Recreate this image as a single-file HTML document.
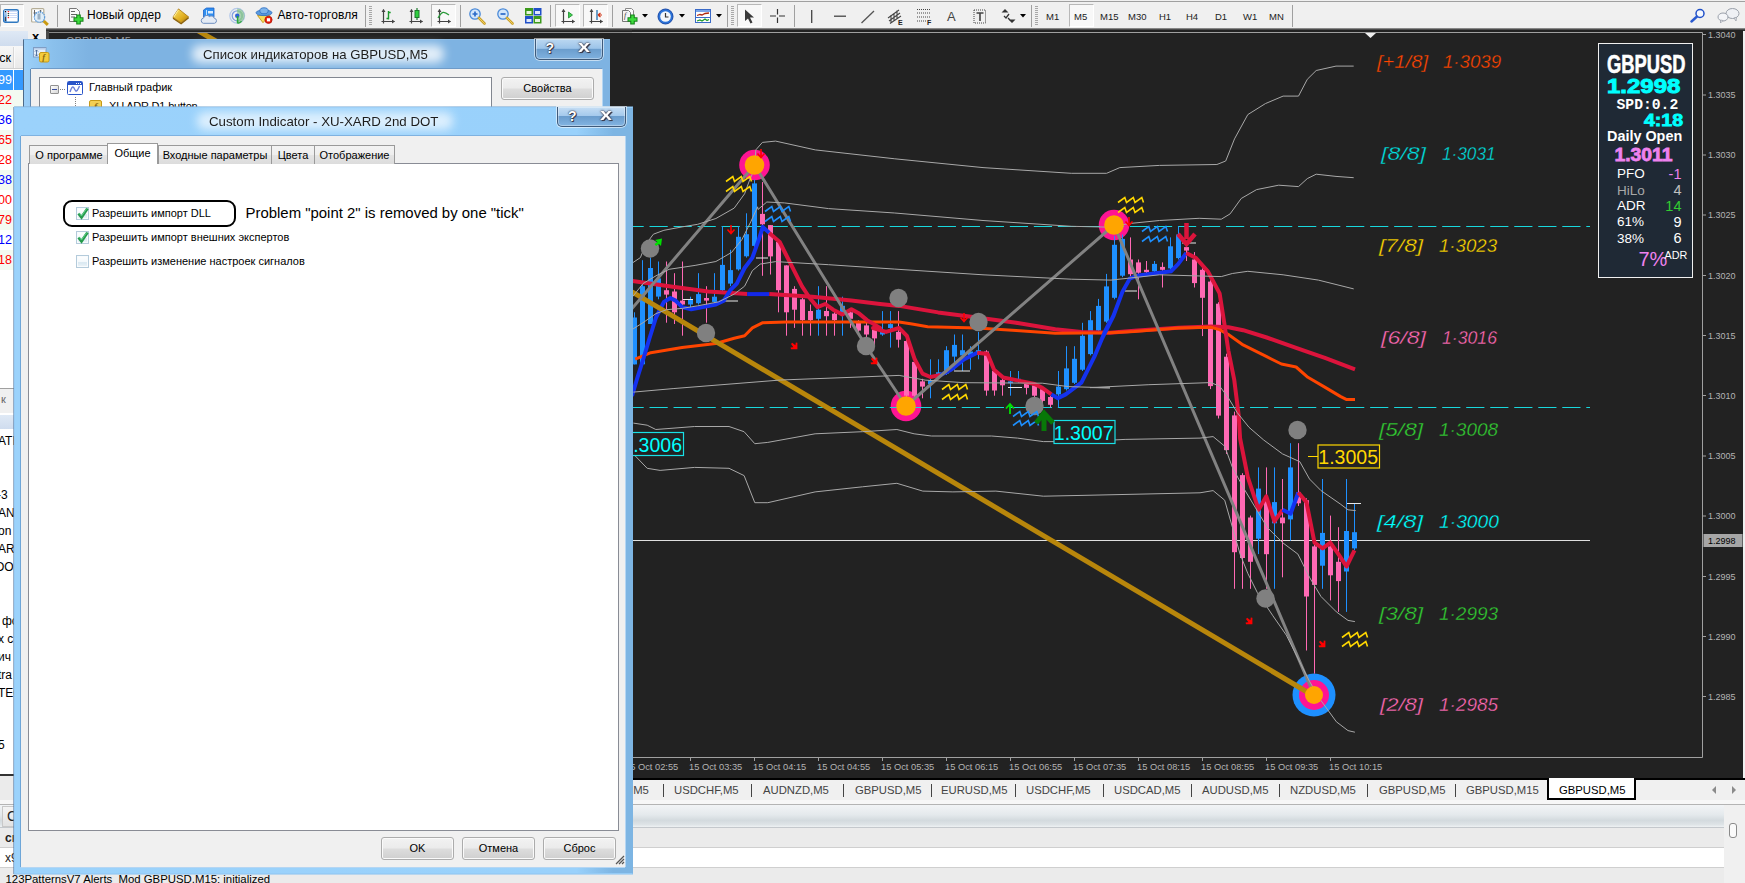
<!DOCTYPE html>
<html lang="ru">
<head>
<meta charset="utf-8">
<title>MetaTrader 4</title>
<style>
html,body{margin:0;padding:0;background:#f0f0f0;}
body{width:1745px;height:883px;overflow:hidden;position:relative;font-family:"Liberation Sans",sans-serif;font-size:11px;color:#000;}
.abs{position:absolute;}
#toolbar{left:0;top:0;width:1745px;height:31px;background:#f0f0f0;}
#toolbar .topline{left:0;top:1px;width:1745px;height:1px;background:#a0a0a0;}
#toolbar .botline{left:46px;top:28px;width:1699px;height:3px;background:linear-gradient(#a8a8a8,#505050 45%,#222222);}
.prs{box-sizing:border-box;border:1px solid #b8b8b8;border-right-color:#fff;border-bottom-color:#fff;background:#f8f8f8;}
.tbtxt{position:absolute;top:8px;font-size:12px;white-space:nowrap;color:#000;}
.tf{position:absolute;top:11px;font-size:9.500px;color:#222;white-space:nowrap;}
.sep{position:absolute;top:5px;width:1px;height:22px;background:#a0a0a0;}
.grip{position:absolute;top:6px;width:3px;height:20px;background:repeating-linear-gradient(#a8a8a8 0 1px,#f0f0f0 1px 2px);}
#chart{left:632px;top:30px;width:1111px;height:748px;background:#222222;}
#chartsvg{position:absolute;left:0;top:0;}
#left{left:0;top:31px;width:46px;height:852px;background:#fff;overflow:hidden;}
.mw{left:-2px;width:13px;text-align:right;font-size:12.500px;white-space:nowrap;}
.nv{left:-2px;font-size:12px;white-space:nowrap;color:#000;}
#tabsbar{left:632px;top:778px;width:1113px;height:22px;background:#f0f0f0;border-top:1px solid #fff;box-sizing:border-box;}
.ctab{position:absolute;top:5px;font-size:11.300px;color:#444;white-space:nowrap;}
.csep{position:absolute;top:5px;width:1px;height:13px;background:#444;}
#term{left:0;top:800px;width:1745px;height:83px;background:#f0f0f0;}
/* dialogs */
.dlg{position:absolute;box-sizing:border-box;}
.dlg .title{position:absolute;left:0;right:0;text-align:center;font-size:14px;color:#000;white-space:nowrap;}
.client{position:absolute;background:#f0f0f0;}
.capbtn{position:absolute;box-sizing:border-box;border:1px solid #3f5a7a;border-top:none;border-radius:0 0 5px 5px;box-shadow:0 0 0 1px rgba(255,255,255,.55),inset 0 0 0 1px rgba(255,255,255,.35);}
.btn{position:absolute;box-sizing:border-box;border:1px solid #acacac;border-radius:3px;background:linear-gradient(#f2f2f2 0%,#ebebeb 48%,#dddddd 52%,#cfcfcf 100%);text-align:center;font-size:11px;color:#000;box-shadow:inset 0 0 0 1px #fafafa;}
.tab{position:absolute;box-sizing:border-box;border:1px solid #9a9a9a;border-bottom:none;background:linear-gradient(#f3f3f3,#eeeeee 50%,#e4e4e4 51%,#dcdcdc);font-size:11px;text-align:center;white-space:nowrap;}
.chk{position:absolute;width:11px;height:11px;border:1px solid #b4cbdb;background:linear-gradient(180deg,#ffffff 0%,#f4f9fc 50%,#d9e8f1 60%,#eef5f9 100%);box-shadow:inset 0 0 0 1px #f8fbfd;}
.glow{position:absolute;background:rgba(255,255,255,.78);filter:blur(5px);border-radius:8px;}
.capx{transform:scaleX(1.350);transform-origin:0 0;font-size:16px !important;top:-1px !important;}
.capg{position:absolute;top:1px;font-size:14px;font-weight:bold;color:#fff;text-shadow:0 0 1px #223,0 0 2px #334,1px 1px 0 #445;font-family:"Liberation Sans",sans-serif;}
.lbl{position:absolute;font-size:11px;white-space:nowrap;}
</style>
</head>
<body>
<!-- ======= TOOLBAR ======= -->
<div id="toolbar" class="abs">
<div class="abs topline"></div><div class="abs botline"></div>
<div class="abs prs" style="left:0px;top:4px;width:24px;height:23px"></div>
<svg class="abs" style="left:3px;top:9px" width="17" height="15" viewBox="0 0 17 15"><defs><linearGradient id="mwg" x1="0" y1="0" x2="0" y2="1"><stop offset="0" stop-color="#cfe3fa"/><stop offset="1" stop-color="#2f78c8"/></linearGradient></defs><rect x="0.700" y="0.700" width="14.600" height="12.600" rx="1.600" fill="#fff" stroke="#2f78c0" stroke-width="1.400"/><rect x="1.300" y="1.300" width="2.400" height="11.400" fill="url(#mwg)"/><path d="M6.500 2.500h8M6.500 4.500h8M6.500 6.500h8M6.500 8.500h8" stroke="#cfdcf8" stroke-width="1"/><rect x="4.700" y="2" width="1.400" height="1.200" fill="#f22"/><rect x="4.700" y="4" width="1.400" height="1.200" fill="#243"/><rect x="4.700" y="6" width="1.400" height="1.200" fill="#243"/><rect x="4.700" y="8" width="1.400" height="1.200" fill="#f22"/><rect x="1.900" y="2" width="1.200" height="1.200" fill="#000"/><rect x="2" y="8" width="1" height="4" fill="#444"/></svg>
<svg class="abs" style="left:31px;top:8px" width="19" height="18" viewBox="0 0 19 18"><rect x="0.600" y="0.600" width="12.200" height="13.400" rx="1" fill="#fff" stroke="#b5ae98" stroke-width="1.200"/><path d="M3.500 2v6M2.500 5h3M9.500 2v4M8.500 3h2" stroke="#666" stroke-width="1"/><circle cx="8.500" cy="9.100" r="5.200" fill="#dcedf8" fill-opacity=".92" stroke="#4a90d8" stroke-width="1.100" stroke-dasharray="1.500 .700"/><rect x="6.500" y="5.500" width="3" height="6" fill="#9ab0c4"/><path d="M12.800 13L16.800 16.800" stroke="#c99a10" stroke-width="3" stroke-linecap="butt"/></svg>
<div class="sep" style="left:57px"></div>
<svg class="abs" style="left:68px;top:8px" width="17" height="18" viewBox="0 0 17 18"><path d="M1.500 0.500h7l3 3v10h-10z" fill="#fafafa" stroke="#777"/><path d="M3 3.500h4M3 6.500h6M3 9h4" stroke="#666" stroke-width="1.200"/><path d="M10.500 6.500v10M5.500 11.500h10" stroke="#14821a" stroke-width="4.600"/><path d="M10.500 7.500v8M6.500 11.500h8" stroke="#3ddc3d" stroke-width="2.400"/></svg>
<span class="tbtxt" id="no" style="left:87px">Новый ордер</span>
<svg class="abs" style="left:172px;top:8px" width="19" height="17" viewBox="0 0 19 17"><defs><linearGradient id="bkg" x1="0" y1="0" x2="1" y2="1"><stop offset="0" stop-color="#fbe36a"/><stop offset=".6" stop-color="#e0ae20"/><stop offset="1" stop-color="#a87508"/></linearGradient></defs><path d="M6.500 0.900L16.700 9.000L9.100 14.800L0.900 9.300z" fill="url(#bkg)" stroke="#a87508" stroke-width=".800"/><path d="M1 10.300l8.100 5.500 7.500-6" stroke="#8a5f08" stroke-width="1.300" fill="none"/><path d="M6.300 2l-4.500 7" stroke="#fff3a8" stroke-width="1" fill="none"/></svg>
<svg class="abs" style="left:200px;top:7px" width="19" height="18" viewBox="0 0 19 18"><path d="M3.500 3l3-2h7.500v9h-10.500z" fill="#2f8ef0" stroke="#1c62c8" stroke-width=".800"/><path d="M6.500 3v7" stroke="#bfe0ff" stroke-width="1"/><rect x="8" y="4" width="5" height="2.500" fill="#d8ecff"/><path d="M3.300 16.300a2.700 2.700 0 0 1 0.300-5.300 3.300 3.300 0 0 1 5.800-1.400 3 3 0 0 1 4.800 1.600 2.600 2.600 0 0 1 .3 5.100z" fill="#e4ebf5" stroke="#6f8fc0" stroke-width="1"/></svg>
<svg class="abs" style="left:228px;top:7px" width="18" height="18" viewBox="0 0 18 18"><circle cx="9.200" cy="8.800" r="7.400" fill="none" stroke="#b4c8ea" stroke-width="1.200"/><circle cx="9.200" cy="8.800" r="5" fill="none" stroke="#7f9fe0" stroke-width="1.300"/><path d="M9.200 1.400a7.400 7.400 0 0 1 0 14.800z" fill="#6fb87a" fill-opacity=".55"/><path d="M9.200 3.800a5 5 0 0 1 0 10" fill="none" stroke="#8cc896" stroke-width="1.300"/><circle cx="9.200" cy="8.800" r="2.200" fill="#2f62d8"/><path d="M9.600 9v7.300" stroke="#2aa83a" stroke-width="1.600"/><path d="M9.600 16.200a7.500 7.500 0 0 0 4-2" stroke="#3aaa4a" stroke-width="1.400" fill="none"/></svg>
<svg class="abs" style="left:255px;top:7px" width="19" height="18" viewBox="0 0 19 18"><path d="M2.500 8.500l5.500 7.200 7-7.500z" fill="#f6dc5a" stroke="#c7981a" stroke-width=".900"/><ellipse cx="9" cy="5.800" rx="8" ry="2.800" fill="#5a9be0" stroke="#3474c4" stroke-width=".900"/><ellipse cx="9" cy="3.800" rx="4.200" ry="3" fill="#7cb4ec" stroke="#3474c4" stroke-width=".900"/><circle cx="13.500" cy="12.800" r="3.600" fill="#e8200c" stroke="#b01408" stroke-width=".800"/><rect x="11.900" y="11.200" width="3.200" height="3.200" fill="#fff"/></svg>
<span class="tbtxt" id="at" style="left:277.400px;letter-spacing:.100px">Авто-торговля</span>
<div class="sep" style="left:365px"></div>
<div class="grip" style="left:369px"></div>
<svg class="abs" style="left:381px;top:9px" width="15" height="16" viewBox="0 0 15 16"><path d="M2.500 0.500v14M0.500 12.500h13" stroke="#444" stroke-width="1.200" fill="none"/><path d="M2.500 0l-2 3h4zM14 12.500l-3-2v4z" fill="#444"/><path d="M7.500 2v8.500M7.500 3.500h2.200M5.500 9.500h2" stroke="#1c9a2c" stroke-width="1.400" fill="none"/></svg>
<svg class="abs" style="left:409px;top:8px" width="15" height="17" viewBox="0 0 15 17"><g transform="translate(0,1)"><path d="M2.500 0.500v14M0.500 12.500h13" stroke="#444" stroke-width="1.200" fill="none"/><path d="M2.500 0l-2 3h4zM14 12.500l-3-2v4z" fill="#444"/></g><path d="M8 0v12" stroke="#1c7a2c" stroke-width="1.200"/><rect x="6" y="2.500" width="4" height="7" fill="#2fcf3f" stroke="#1c7a2c"/></svg>
<div class="abs prs" style="left:431px;top:4px;width:25px;height:23px"></div>
<svg class="abs" style="left:437px;top:9px" width="15" height="16" viewBox="0 0 15 16"><path d="M2.500 0.500v14M0.500 12.500h13" stroke="#444" stroke-width="1.200" fill="none"/><path d="M2.500 0l-2 3h4zM14 12.500l-3-2v4z" fill="#444"/><path d="M1 9c4-7 6-7 11-3" stroke="#2a9a3a" stroke-width="1.300" fill="none"/></svg>
<div class="sep" style="left:460px"></div>
<svg class="abs" style="left:469px;top:8px" width="17" height="17" viewBox="0 0 17 17"><circle cx="6" cy="6" r="5.200" fill="#d4e6fa" stroke="#4a8ad8" stroke-width="1.300"/><path d="M3.500 6h5M6 3.500v5" stroke="#2a6ac8" stroke-width="1.700"/><path d="M10 10l5.500 5.500" stroke="#caa02a" stroke-width="2.600" stroke-linecap="round"/><path d="M10 10l5.500 5.500" stroke="#f0d060" stroke-width="1" stroke-linecap="round"/></svg>
<svg class="abs" style="left:497px;top:8px" width="17" height="17" viewBox="0 0 17 17"><circle cx="6" cy="6" r="5.200" fill="#d4e6fa" stroke="#4a8ad8" stroke-width="1.300"/><path d="M3.500 6h5" stroke="#2a6ac8" stroke-width="1.700"/><path d="M10 10l5.500 5.500" stroke="#caa02a" stroke-width="2.600" stroke-linecap="round"/><path d="M10 10l5.500 5.500" stroke="#f0d060" stroke-width="1" stroke-linecap="round"/></svg>
<svg class="abs" style="left:525px;top:8px" width="17" height="16" viewBox="0 0 17 16"><rect x="0" y="0" width="8" height="7.500" fill="#3c9a1c"/><rect x="8.500" y="0" width="8" height="7.500" fill="#2050c8"/><rect x="0" y="8" width="8" height="7.500" fill="#2050c8"/><rect x="8.500" y="8" width="8" height="7.500" fill="#3c9a1c"/><rect x="1.500" y="3" width="5" height="3" fill="#e8f4e0"/><rect x="10" y="3" width="5" height="3" fill="#dfe8fb"/><rect x="1.500" y="11" width="5" height="3" fill="#dfe8fb"/><rect x="10" y="11" width="5" height="3" fill="#e8f4e0"/></svg>
<div class="sep" style="left:550px"></div>
<div class="abs prs" style="left:555px;top:4px;width:25px;height:23px"></div>
<svg class="abs" style="left:561px;top:9px" width="15" height="16" viewBox="0 0 15 16"><path d="M2.500 0.500v14M0.500 12.500h13" stroke="#444" stroke-width="1.200" fill="none"/><path d="M2.500 0l-2 3h4zM14 12.500l-3-2v4z" fill="#444"/><path d="M7.500 3l4 3-4 3z" fill="#3fd04f" stroke="#1c8a2c" stroke-width=".800"/></svg>
<div class="abs prs" style="left:583px;top:4px;width:25px;height:23px"></div>
<svg class="abs" style="left:589px;top:9px" width="15" height="16" viewBox="0 0 15 16"><path d="M2.500 0.500v14M0.500 12.500h13" stroke="#444" stroke-width="1.200" fill="none"/><path d="M2.500 0l-2 3h4zM14 12.500l-3-2v4z" fill="#444"/><path d="M8 1v10" stroke="#1f6fb0" stroke-width="1.300"/><path d="M9 6h4M9 6l2.500-2M9 6l2.500 2" stroke="#d03010" stroke-width="1.200" fill="none"/></svg>
<div class="sep" style="left:612px"></div>
<svg class="abs" style="left:622px;top:8px" width="17" height="18" viewBox="0 0 17 18"><path d="M3.500 0.500h6l2 2v9h-8z" fill="#fafafa" stroke="#888"/><path d="M0.500 2.500h6l2 2v9h-8z" fill="#f4f4f4" stroke="#777"/><text x="2" y="10" font-size="8" font-style="italic" fill="#444" font-family="Liberation Serif,serif">f</text><path d="M10.500 6.500v10M5.500 11.500h10" stroke="#14821a" stroke-width="4.600"/><path d="M10.500 7.500v8M6.500 11.500h8" stroke="#3ddc3d" stroke-width="2.400"/></svg>
<svg class="abs" style="left:642px;top:14px" width="6" height="4" viewBox="0 0 6 4"><path d="M0 0h6l-3 3.500z" fill="#000"/></svg>
<svg class="abs" style="left:657px;top:8px" width="18" height="17" viewBox="0 0 18 17"><circle cx="8.500" cy="8.500" r="7.500" fill="#2a72d8" stroke="#1a4aa8"/><circle cx="8.500" cy="8.500" r="5.300" fill="#f2f6fc"/><path d="M8.500 5v4h3" stroke="#333" stroke-width="1.200" fill="none"/></svg>
<svg class="abs" style="left:679px;top:14px" width="6" height="4" viewBox="0 0 6 4"><path d="M0 0h6l-3 3.500z" fill="#000"/></svg>
<svg class="abs" style="left:695px;top:9px" width="17" height="15" viewBox="0 0 17 15"><rect x="0.500" y="0.500" width="15" height="13" fill="#fff" stroke="#3a6ac8"/><rect x="1" y="1" width="14" height="2" fill="#7aa4e8"/><path d="M2 6.500l3-1 2 .5 3-1.500 4-.5" stroke="#b02a10" stroke-width="1.300" fill="none"/><path d="M1 8.500h14" stroke="#3a6ac8" stroke-width="1"/><path d="M2 12l3-1 2 1 3-2 2 1.500 2-1" stroke="#1c9a2c" stroke-width="1.300" fill="none"/></svg>
<svg class="abs" style="left:716px;top:14px" width="6" height="4" viewBox="0 0 6 4"><path d="M0 0h6l-3 3.500z" fill="#000"/></svg>
<div class="sep" style="left:727px"></div>
<div class="grip" style="left:731px"></div>
<div class="abs prs" style="left:737px;top:4px;width:25px;height:23px"></div>
<svg class="abs" style="left:744px;top:9px" width="11" height="15" viewBox="0 0 11 15"><path d="M1 0.500v11.500l3-2.500 2.500 5 2-1-2.500-5h4z" fill="#3a3a3a"/></svg>
<svg class="abs" style="left:770px;top:8px" width="16" height="16" viewBox="0 0 16 16"><path d="M7.500 1v5.500M7.500 9.500v5.500M0 8h6M9 8h6" stroke="#333" stroke-width="1.200"/></svg>
<div class="sep" style="left:794px"></div>
<svg class="abs" style="left:810px;top:9px" width="4" height="15" viewBox="0 0 4 15"><path d="M1.700 1v13" stroke="#444" stroke-width="1.300"/></svg>
<svg class="abs" style="left:833px;top:14px" width="14" height="4" viewBox="0 0 14 4"><path d="M1 2.200h12" stroke="#444" stroke-width="1.300"/></svg>
<svg class="abs" style="left:861px;top:10px" width="14" height="14" viewBox="0 0 14 14"><path d="M0.500 13L13 1" stroke="#555" stroke-width="1.300"/></svg>
<svg class="abs" style="left:887px;top:8px" width="17" height="18" viewBox="0 0 17 18"><path d="M1 10L12 2M2 13L13 5M3 15.500L14 8M4 7v8M7 5v8M10 2.500v8" stroke="#444" stroke-width="1.100"/><text x="11" y="17" font-size="7" font-weight="bold" fill="#222" font-family="Liberation Sans,sans-serif">E</text></svg>
<svg class="abs" style="left:916px;top:8px" width="17" height="18" viewBox="0 0 17 18"><path d="M1 1.500h13M1 5h13M1 9h13M1 13h9" stroke="#444" stroke-width="1.100" stroke-dasharray="1 1"/><text x="11" y="17" font-size="7" font-weight="bold" fill="#222" font-family="Liberation Sans,sans-serif">F</text></svg>
<span class="abs" style="left:947px;top:9px;font-size:13px;color:#444;">A</span>
<svg class="abs" style="left:973px;top:9px" width="14" height="15" viewBox="0 0 14 15"><rect x="1" y="1" width="11.500" height="13" fill="none" stroke="#444" stroke-width="1" stroke-dasharray="1 1"/><path d="M3.500 4h7M7 4v8" stroke="#444" stroke-width="1.600"/></svg>
<svg class="abs" style="left:1001px;top:9px" width="15" height="15" viewBox="0 0 15 15"><path d="M4 0l3.500 3.500h-7zM11 14l-3.500-3.500h7z" fill="#333"/><path d="M3 7l2 2 3-4M7 9l2 2" stroke="#333" stroke-width="1.300" fill="none"/></svg>
<svg class="abs" style="left:1020px;top:14px" width="6" height="4" viewBox="0 0 6 4"><path d="M0 0h6l-3 3.500z" fill="#000"/></svg>
<div class="sep" style="left:1031px"></div>
<div class="grip" style="left:1035px"></div>
<div class="abs prs" style="left:1069px;top:4px;width:25px;height:23px"></div>
<span class="tf" style="left:1046px">M1</span>
<span class="tf" style="left:1074px">M5</span>
<span class="tf" style="left:1100px">M15</span>
<span class="tf" style="left:1128px">M30</span>
<span class="tf" style="left:1159px">H1</span>
<span class="tf" style="left:1186px">H4</span>
<span class="tf" style="left:1215px">D1</span>
<span class="tf" style="left:1243px">W1</span>
<span class="tf" style="left:1269px">MN</span>
<div class="sep" style="left:1292px"></div>
<svg class="abs" style="left:1690px;top:8px" width="16" height="16" viewBox="0 0 16 16"><circle cx="10" cy="5.500" r="4" fill="#f4f8ff" stroke="#2050c8" stroke-width="1.500"/><path d="M7 8.500L1.500 13.500" stroke="#2a5ad0" stroke-width="2.400" stroke-linecap="round"/></svg>
<svg class="abs" style="left:1717px;top:7px" width="24" height="18" viewBox="0 0 24 18"><ellipse cx="15.500" cy="6.500" rx="6.500" ry="5" fill="#eef0f4" stroke="#9aa0aa"/><path d="M17 11l2 3 .5-3.500z" fill="#eef0f4" stroke="#9aa0aa" stroke-width=".800"/><ellipse cx="6" cy="10" rx="5" ry="4" fill="#f4f5f8" stroke="#9aa0aa"/><path d="M3.500 13l0 3 2.500-2.500z" fill="#f4f5f8" stroke="#9aa0aa" stroke-width=".800"/></svg>
</div>

<!-- ======= LEFT STRIP ======= -->
<div id="left" class="abs">
<div class="abs" style="left:0;top:0;width:28px;height:15px;background:linear-gradient(#dfe9f5,#cfdcee);"></div>
<div class="abs" style="left:28px;top:0;width:18px;height:15px;background:#f0f0f0;"></div>
<span class="abs" style="left:32px;top:-2px;font-size:13px;font-weight:bold;color:#000;">x</span>
<div class="abs" style="left:0;top:2px;width:46px;height:850px;">
<div class="abs" style="left:0;top:13px;width:46px;height:22px;background:linear-gradient(#f7f7f7,#e9e9e9);border-bottom:1px solid #d0d0d0;"></div>
<div class="abs" style="left:13px;top:14px;width:2px;height:21px;background:#fafafa;border-left:1px solid #d8d8d8;box-sizing:border-box;"></div>
<span class="abs mw" style="top:18px;color:#000;">ск</span>
<div class="abs" style="left:0;top:37px;width:46px;height:20px;background:#3399ff;"></div>
<div class="abs" style="left:13px;top:37px;width:1px;height:203px;background:#fff;"></div>
<span class="abs mw" style="top:40px;color:#fff;">99</span>
<div class="abs" style="left:0;top:57px;width:46px;height:20px;background:#f3faf1;"></div>
<span class="abs mw" style="top:60px;color:#f00;">22</span>
<span class="abs mw" style="top:80px;color:#00f;">36</span>
<div class="abs" style="left:0;top:97px;width:46px;height:20px;background:#f3faf1;"></div>
<span class="abs mw" style="top:100px;color:#f00;">65</span>
<span class="abs mw" style="top:120px;color:#f00;">28</span>
<div class="abs" style="left:0;top:137px;width:46px;height:20px;background:#f3faf1;"></div>
<span class="abs mw" style="top:140px;color:#00f;">38</span>
<span class="abs mw" style="top:160px;color:#f00;">00</span>
<div class="abs" style="left:0;top:177px;width:46px;height:20px;background:#f3faf1;"></div>
<span class="abs mw" style="top:180px;color:#f00;">79</span>
<span class="abs mw" style="top:200px;color:#00f;">12</span>
<div class="abs" style="left:0;top:217px;width:46px;height:20px;background:#f3faf1;"></div>
<span class="abs mw" style="top:220px;color:#f00;">18</span>
<!-- tabs of market watch + navigator -->
<div class="abs" style="left:0;top:355px;width:46px;height:1px;background:#a0a0a0;"></div>
<div class="abs" style="left:0;top:356px;width:46px;height:24px;background:#f0f0f0;"></div>
<span class="abs" style="left:1px;top:360px;font-size:11px;color:#666;">к</span>
<div class="abs" style="left:0;top:381px;width:46px;height:14px;background:linear-gradient(#dfe9f5,#cfdcee);border-top:1px solid #fff;"></div>
<span class="abs nv" style="top:401px;">ATH</span>
<span class="abs nv" style="top:455px;left:-3px">-3</span>
<span class="abs nv" style="top:473px;">AN</span>
<span class="abs nv" style="top:491px;">on</span>
<span class="abs nv" style="top:509px;">ARF</span>
<span class="abs nv" style="top:527px;left:-5px">OO</span>
<span class="abs nv" style="top:581px;left:2px">фо</span>
<span class="abs nv" style="top:599px;">x с</span>
<span class="abs nv" style="top:617px;">ич</span>
<span class="abs nv" style="top:635px;">tra</span>
<span class="abs nv" style="top:653px;">TEC</span>
<span class="abs nv" style="top:705px;">5</span>
<div class="abs" style="left:0;top:741px;width:46px;height:2px;background:#333;"></div>
<div class="abs" style="left:0;top:743px;width:46px;height:110px;background:#ebebeb;"></div>
</div>
</div>
<!-- dark MDI background behind dialogs -->
<div class="abs" style="left:46px;top:31px;width:600px;height:90px;background:#222222;border-left:3px solid #4a4a4a;box-sizing:border-box;overflow:hidden;">
<div class="abs" style="left:0;top:1px;width:600px;height:1px;background:#8a8a8a;"></div>
<div class="abs" style="left:0;top:2px;width:600px;height:88px;overflow:hidden;">
<span class="abs" style="left:17px;top:2px;font-size:11px;color:#9a9a9a;">GBPUSD,M5</span>
<div class="abs" style="left:145px;top:1px;width:28px;height:5px;background:#b8860b;transform:rotate(30deg);"></div>
</div>
</div>

<!-- ======= CHART ======= -->
<div id="chart" class="abs">
<svg id="chartsvg" width="1111" height="748" viewBox="632 30 1111 748">
<!--CHART-->
<circle cx="754.5" cy="165" r="15.300" fill="#ff1493"/>
<circle cx="906" cy="406" r="15.300" fill="#ff1493"/>
<circle cx="1114" cy="225" r="15.300" fill="#ff1493"/>
<circle cx="1314" cy="695" r="21.500" fill="#1e90ff"/><circle cx="1314" cy="695" r="15" fill="#ff1493"/>
<path d="M625.500 226.500H1590M625.500 407.500H1590" stroke="#19d7dc" stroke-width="1.100" stroke-dasharray="18.200 5.820" fill="none"/>
<path d="M632 540.500H1590" stroke="#e0e0e0" stroke-width="1" fill="none"/>
<path d="M634.5 312.3V364.4" stroke="#1e90ff" stroke-width="1"/><rect x="632.0" y="317.5" width="5" height="46.9" fill="#1e90ff"/>
<path d="M642.5 260.2V364.4" stroke="#1e90ff" stroke-width="1"/><rect x="640.0" y="286.2" width="5" height="78.1" fill="#1e90ff"/>
<path d="M650.5 257.6V324.0" stroke="#1e90ff" stroke-width="1"/><rect x="648.0" y="268.0" width="5" height="56.0" fill="#1e90ff"/>
<path d="M658.5 261.5V299.3" stroke="#1e90ff" stroke-width="1"/><rect x="656.0" y="278.4" width="5" height="18.2" fill="#1e90ff"/>
<path d="M666.5 261.5V322.7" stroke="#ff69b4" stroke-width="1"/><rect x="664.0" y="290.2" width="5" height="4.4" fill="#ff69b4"/>
<path d="M674.5 273.2V324.0" stroke="#ff69b4" stroke-width="1"/><rect x="672.0" y="291.5" width="5" height="20.8" fill="#ff69b4"/>
<path d="M682.5 261.5V335.7" stroke="#ff69b4" stroke-width="1"/><rect x="680.0" y="300.6" width="5" height="3.9" fill="#ff69b4"/>
<path d="M690.5 296.7V311.0" stroke="#1e90ff" stroke-width="1"/><rect x="688.0" y="299.3" width="5" height="5.2" fill="#1e90ff"/>
<path d="M698.5 273.2V304.5" stroke="#1e90ff" stroke-width="1"/><rect x="696.0" y="294.1" width="5" height="9.1" fill="#1e90ff"/>
<path d="M706.5 286.2V322.7" stroke="#ff69b4" stroke-width="1"/><rect x="704.0" y="298.0" width="5" height="2.6" fill="#ff69b4"/>
<path d="M714.5 273.2V303.2" stroke="#1e90ff" stroke-width="1"/><rect x="712.0" y="296.7" width="5" height="5.2" fill="#1e90ff"/>
<path d="M722.5 226.4V291.5" stroke="#1e90ff" stroke-width="1"/><rect x="720.0" y="264.9" width="5" height="25.3" fill="#1e90ff"/>
<path d="M730.5 249.8V286.2" stroke="#1e90ff" stroke-width="1"/><rect x="728.0" y="270.1" width="5" height="13.5" fill="#1e90ff"/>
<path d="M738.5 226.4V270.6" stroke="#1e90ff" stroke-width="1"/><rect x="736.0" y="236.8" width="5" height="32.6" fill="#1e90ff"/>
<path d="M746.5 213.3V257.6" stroke="#1e90ff" stroke-width="1"/><rect x="744.0" y="234.2" width="5" height="22.1" fill="#1e90ff"/>
<path d="M754.5 179.5V247.2" stroke="#1e90ff" stroke-width="1"/><rect x="752.0" y="183.4" width="5" height="62.5" fill="#1e90ff"/>
<path d="M762.5 182.1V275.8" stroke="#ff69b4" stroke-width="1"/><rect x="760.0" y="213.9" width="5" height="10.4" fill="#ff69b4"/>
<path d="M770.5 225.1V274.5" stroke="#ff69b4" stroke-width="1"/><rect x="768.0" y="225.1" width="5" height="31.3" fill="#ff69b4"/>
<path d="M778.5 242.0V312.3" stroke="#ff69b4" stroke-width="1"/><rect x="776.0" y="242.0" width="5" height="48.2" fill="#ff69b4"/>
<path d="M786.5 265.4V335.7" stroke="#ff69b4" stroke-width="1"/><rect x="784.0" y="265.4" width="5" height="46.9" fill="#ff69b4"/>
<path d="M794.5 286.2V327.9" stroke="#ff69b4" stroke-width="1"/><rect x="792.0" y="288.9" width="5" height="20.8" fill="#ff69b4"/>
<path d="M802.5 296.7V335.7" stroke="#ff69b4" stroke-width="1"/><rect x="800.0" y="299.3" width="5" height="20.8" fill="#ff69b4"/>
<path d="M810.5 304.5V335.7" stroke="#ff69b4" stroke-width="1"/><rect x="808.0" y="311.0" width="5" height="9.1" fill="#ff69b4"/>
<path d="M818.5 286.2V335.7" stroke="#1e90ff" stroke-width="1"/><rect x="816.0" y="309.7" width="5" height="9.1" fill="#1e90ff"/>
<path d="M826.5 286.2V335.7" stroke="#ff69b4" stroke-width="1"/><rect x="824.0" y="311.0" width="5" height="5.2" fill="#ff69b4"/>
<path d="M834.5 309.7V335.7" stroke="#ff69b4" stroke-width="1"/><rect x="832.0" y="313.6" width="5" height="6.5" fill="#ff69b4"/>
<path d="M842.5 296.7V335.7" stroke="#1e90ff" stroke-width="1"/><rect x="840.0" y="305.8" width="5" height="6.5" fill="#1e90ff"/>
<path d="M850.5 309.7V327.9" stroke="#ff69b4" stroke-width="1"/><rect x="848.0" y="312.3" width="5" height="6.5" fill="#ff69b4"/>
<path d="M858.5 320.2V335.8" stroke="#ff69b4" stroke-width="1"/><rect x="856.0" y="321.5" width="5" height="9.1" fill="#ff69b4"/>
<path d="M866.5 322.8V339.7" stroke="#ff69b4" stroke-width="1"/><rect x="864.0" y="325.4" width="5" height="9.1" fill="#ff69b4"/>
<path d="M874.5 326.7V346.2" stroke="#ff69b4" stroke-width="1"/><rect x="872.0" y="329.3" width="5" height="9.1" fill="#ff69b4"/>
<path d="M882.5 311.1V335.8" stroke="#1e90ff" stroke-width="1"/><rect x="880.0" y="331.9" width="5" height="2.6" fill="#1e90ff"/>
<path d="M890.5 311.1V347.6" stroke="#1e90ff" stroke-width="1"/><rect x="888.0" y="324.1" width="5" height="3.9" fill="#1e90ff"/>
<path d="M898.5 311.1V347.6" stroke="#ff69b4" stroke-width="1"/><rect x="896.0" y="331.9" width="5" height="7.8" fill="#ff69b4"/>
<path d="M906.5 335.8V398.3" stroke="#ff69b4" stroke-width="1"/><rect x="904.0" y="341.0" width="5" height="54.7" fill="#ff69b4"/>
<path d="M914.5 356.7V398.3" stroke="#ff69b4" stroke-width="1"/><rect x="912.0" y="361.9" width="5" height="33.9" fill="#ff69b4"/>
<path d="M922.5 378.8V398.3" stroke="#ff69b4" stroke-width="1"/><rect x="920.0" y="381.4" width="5" height="5.2" fill="#ff69b4"/>
<path d="M930.5 359.3V398.3" stroke="#1e90ff" stroke-width="1"/><rect x="928.0" y="380.1" width="5" height="3.9" fill="#1e90ff"/>
<path d="M938.5 359.3V376.2" stroke="#1e90ff" stroke-width="1"/><rect x="936.0" y="372.3" width="5" height="2.6" fill="#1e90ff"/>
<path d="M946.5 346.2V374.9" stroke="#1e90ff" stroke-width="1"/><rect x="944.0" y="350.2" width="5" height="23.4" fill="#1e90ff"/>
<path d="M954.5 334.5V369.7" stroke="#1e90ff" stroke-width="1"/><rect x="952.0" y="344.9" width="5" height="11.7" fill="#1e90ff"/>
<path d="M962.5 334.5V371.0" stroke="#1e90ff" stroke-width="1"/><rect x="960.0" y="350.2" width="5" height="5.2" fill="#1e90ff"/>
<path d="M970.5 346.2V369.7" stroke="#1e90ff" stroke-width="1"/><rect x="968.0" y="351.5" width="5" height="5.2" fill="#1e90ff"/>
<path d="M978.5 331.9V359.3" stroke="#1e90ff" stroke-width="1"/><rect x="976.0" y="350.2" width="5" height="3.9" fill="#1e90ff"/>
<path d="M986.5 350.2V395.7" stroke="#ff69b4" stroke-width="1"/><rect x="984.0" y="351.5" width="5" height="39.1" fill="#ff69b4"/>
<path d="M994.5 369.7V395.7" stroke="#ff69b4" stroke-width="1"/><rect x="992.0" y="371.0" width="5" height="19.5" fill="#ff69b4"/>
<path d="M1002.5 377.5V395.7" stroke="#ff69b4" stroke-width="1"/><rect x="1000.0" y="380.1" width="5" height="5.2" fill="#ff69b4"/>
<path d="M1010.5 371.0V395.7" stroke="#1e90ff" stroke-width="1"/><rect x="1008.0" y="381.4" width="5" height="1.8" fill="#1e90ff"/>
<path d="M1018.5 371.0V382.7" stroke="#1e90ff" stroke-width="1"/><rect x="1016.0" y="378.8" width="5" height="2.6" fill="#1e90ff"/>
<path d="M1026.5 381.4V394.4" stroke="#ff69b4" stroke-width="1"/><rect x="1024.0" y="384.0" width="5" height="3.9" fill="#ff69b4"/>
<path d="M1034.5 384.0V398.3" stroke="#ff69b4" stroke-width="1"/><rect x="1032.0" y="385.3" width="5" height="10.4" fill="#ff69b4"/>
<path d="M1042.5 387.9V403.5" stroke="#ff69b4" stroke-width="1"/><rect x="1040.0" y="389.2" width="5" height="11.7" fill="#ff69b4"/>
<path d="M1050.5 395.7V407.4" stroke="#ff69b4" stroke-width="1"/><rect x="1048.0" y="397.0" width="5" height="7.8" fill="#ff69b4"/>
<path d="M1058.5 371.0V407.4" stroke="#1e90ff" stroke-width="1"/><rect x="1056.0" y="386.6" width="5" height="7.8" fill="#1e90ff"/>
<path d="M1066.5 346.2V390.5" stroke="#1e90ff" stroke-width="1"/><rect x="1064.0" y="368.4" width="5" height="20.8" fill="#1e90ff"/>
<path d="M1074.5 346.2V384.0" stroke="#1e90ff" stroke-width="1"/><rect x="1072.0" y="358.8" width="5" height="24.0" fill="#1e90ff"/>
<path d="M1082.5 322.8V371.0" stroke="#1e90ff" stroke-width="1"/><rect x="1080.0" y="335.8" width="5" height="33.9" fill="#1e90ff"/>
<path d="M1090.5 311.1V355.4" stroke="#1e90ff" stroke-width="1"/><rect x="1088.0" y="320.2" width="5" height="33.9" fill="#1e90ff"/>
<path d="M1098.5 298.9V331.9" stroke="#1e90ff" stroke-width="1"/><rect x="1096.0" y="305.9" width="5" height="24.7" fill="#1e90ff"/>
<path d="M1106.5 273.9V322.8" stroke="#1e90ff" stroke-width="1"/><rect x="1104.0" y="286.4" width="5" height="35.2" fill="#1e90ff"/>
<path d="M1114.5 235.9V299.3" stroke="#1e90ff" stroke-width="1"/><rect x="1112.0" y="244.8" width="5" height="53.0" fill="#1e90ff"/>
<path d="M1122.5 234.5V277.2" stroke="#1e90ff" stroke-width="1"/><rect x="1120.0" y="238.9" width="5" height="36.8" fill="#1e90ff"/>
<path d="M1130.5 237.4V280.1" stroke="#ff69b4" stroke-width="1"/><rect x="1128.0" y="259.5" width="5" height="14.7" fill="#ff69b4"/>
<path d="M1138.5 259.5V299.3" stroke="#ff69b4" stroke-width="1"/><rect x="1136.0" y="262.4" width="5" height="10.3" fill="#ff69b4"/>
<path d="M1146.5 261.0V274.2" stroke="#ff69b4" stroke-width="1"/><rect x="1144.0" y="269.8" width="5" height="2.4" fill="#ff69b4"/>
<path d="M1154.5 261.0V272.8" stroke="#1e90ff" stroke-width="1"/><rect x="1152.0" y="263.9" width="5" height="7.4" fill="#1e90ff"/>
<path d="M1162.5 262.4V287.5" stroke="#ff69b4" stroke-width="1"/><rect x="1160.0" y="266.9" width="5" height="2.9" fill="#ff69b4"/>
<path d="M1170.5 237.4V269.8" stroke="#1e90ff" stroke-width="1"/><rect x="1168.0" y="246.3" width="5" height="22.1" fill="#1e90ff"/>
<path d="M1178.5 226.5V259.5" stroke="#1e90ff" stroke-width="1"/><rect x="1176.0" y="234.5" width="5" height="23.6" fill="#1e90ff"/>
<path d="M1186.5 246.3V261.0" stroke="#ff69b4" stroke-width="1"/><rect x="1184.0" y="247.1" width="5" height="3.5" fill="#ff69b4"/>
<path d="M1194.5 252.1V287.5" stroke="#ff69b4" stroke-width="1"/><rect x="1192.0" y="259.5" width="5" height="23.6" fill="#ff69b4"/>
<path d="M1202.5 268.3V336.1" stroke="#ff69b4" stroke-width="1"/><rect x="1200.0" y="269.8" width="5" height="28.0" fill="#ff69b4"/>
<path d="M1210.5 280.1V389.1" stroke="#ff69b4" stroke-width="1"/><rect x="1208.0" y="281.6" width="5" height="104.5" fill="#ff69b4"/>
<path d="M1218.5 302.2V418.5" stroke="#ff69b4" stroke-width="1"/><rect x="1216.0" y="303.7" width="5" height="111.9" fill="#ff69b4"/>
<path d="M1226.5 353.7V453.9" stroke="#ff69b4" stroke-width="1"/><rect x="1224.0" y="356.7" width="5" height="93.4" fill="#ff69b4"/>
<path d="M1234.5 411.6V588.8" stroke="#ff69b4" stroke-width="1"/><rect x="1232.0" y="415.4" width="5" height="136.8" fill="#ff69b4"/>
<path d="M1242.5 473.2V588.8" stroke="#ff69b4" stroke-width="1"/><rect x="1240.0" y="475.1" width="5" height="82.9" fill="#ff69b4"/>
<path d="M1250.5 515.6V588.8" stroke="#ff69b4" stroke-width="1"/><rect x="1248.0" y="517.5" width="5" height="44.3" fill="#ff69b4"/>
<path d="M1258.5 467.4V554.1" stroke="#1e90ff" stroke-width="1"/><rect x="1256.0" y="488.6" width="5" height="50.1" fill="#1e90ff"/>
<path d="M1266.5 467.4V588.8" stroke="#ff69b4" stroke-width="1"/><rect x="1264.0" y="498.3" width="5" height="55.9" fill="#ff69b4"/>
<path d="M1274.5 467.4V588.8" stroke="#1e90ff" stroke-width="1"/><rect x="1272.0" y="502.1" width="5" height="21.2" fill="#1e90ff"/>
<path d="M1282.5 479.0V577.3" stroke="#ff69b4" stroke-width="1"/><rect x="1280.0" y="517.5" width="5" height="5.8" fill="#ff69b4"/>
<path d="M1290.5 443.2V540.7" stroke="#1e90ff" stroke-width="1"/><rect x="1288.0" y="467.4" width="5" height="52.0" fill="#1e90ff"/>
<path d="M1298.5 443.2V506.0" stroke="#ff69b4" stroke-width="1"/><rect x="1296.0" y="492.5" width="5" height="10.8" fill="#ff69b4"/>
<path d="M1306.5 498.3V650.5" stroke="#ff69b4" stroke-width="1"/><rect x="1304.0" y="500.2" width="5" height="96.3" fill="#ff69b4"/>
<path d="M1314.5 542.6V673.6" stroke="#ff69b4" stroke-width="1"/><rect x="1312.0" y="546.4" width="5" height="38.5" fill="#ff69b4"/>
<path d="M1322.5 479.0V588.8" stroke="#1e90ff" stroke-width="1"/><rect x="1320.0" y="532.9" width="5" height="32.8" fill="#1e90ff"/>
<path d="M1330.5 515.6V600.4" stroke="#ff69b4" stroke-width="1"/><rect x="1328.0" y="546.4" width="5" height="28.9" fill="#ff69b4"/>
<path d="M1338.5 527.2V611.9" stroke="#ff69b4" stroke-width="1"/><rect x="1336.0" y="561.8" width="5" height="19.3" fill="#ff69b4"/>
<path d="M1346.5 479.0V611.9" stroke="#1e90ff" stroke-width="1"/><rect x="1344.0" y="531.0" width="5" height="40.5" fill="#1e90ff"/>
<path d="M1354.5 503.3V550.3" stroke="#1e90ff" stroke-width="1"/><rect x="1352.0" y="532.2" width="5" height="16.2" fill="#1e90ff"/>
<path d="M724 301h14M756 258h12M683 299.500h10M954 371h16M1008 387.500h14M1125 291h12M1182 243h14M1347 503.500h14" stroke="#e8e8e8" stroke-width="1"/>
<polyline points="632.6,281.0 669.1,286.2 708.1,291.5 747.2,294.1" fill="none" stroke="#dc143c" stroke-width="4" stroke-linejoin="round" />
<polyline points="747.2,294.1 769.3,294.1" fill="none" stroke="#1428e8" stroke-width="4" stroke-linejoin="round" />
<polyline points="769.3,294.1 812.3,296.7 851.4,300.6 880.0,304.0 899.1,305.9 938.1,312.4 977.2,317.6 1016.2,322.8 1055.3,329.3 1081.4,331.9 1110.0,332.7 1134.2,330.8 1178.3,327.8 1210.7,326.6 1228.4,327.2 1243.1,330.2 1266.7,337.5 1296.1,347.8 1325.6,358.2 1355.0,369.3" fill="none" stroke="#dc143c" stroke-width="4" stroke-linejoin="round" />
<polyline points="635.2,359.2 650.8,352.7 682.1,347.4 715.9,343.5 734.2,338.3 744.6,335.7 752.4,327.9 762.8,322.7 786.2,321.9 880.0,321.9 899.1,322.0 912.1,324.1 927.7,326.7 977.2,328.0 1016.2,330.6 1055.3,333.2 1110.0,332.7 1134.2,331.6 1178.3,328.1 1210.7,327.2 1219.6,329.6 1228.4,334.6 1243.1,344.9 1266.7,356.7 1281.4,364.0 1296.1,367.0 1307.9,377.3 1325.6,387.6 1340.3,396.4 1346.2,399.4 1355.0,399.4" fill="none" stroke="#ff4500" stroke-width="3" stroke-linejoin="round" />
<polyline points="632,396 637,379 643,360 649.5,338.3 656.0,317.5 663.9,301.9 670.4,298.0 675.6,300.6 682.1,307.1 691.2,309.2 702.9,307.1 715.9,304.5 723.8,300.6 730.3,290.2 736.8,283.6 744.6,268.0 752.4,257.6 758.9,239.4 762.8,226.9 769.3,232.9" fill="none" stroke="#1432f0" stroke-width="4" stroke-linejoin="round" />
<polyline points="769.3,232.9 779.7,242.0 786.2,255.0 794.1,270.6 801.9,286.2 809.7,298.0 817.5,307.1 825.3,304.0 833.1,309.7 842.2,314.4 851.4,309.2 859.2,313.6 867.0,320.1 880.0,327.9 873.0,328.0 886.0,331.9 899.1,328.0 906.9,335.8 914.7,359.3 922.5,373.6 930.3,377.0 940.7,374.9" fill="none" stroke="#dc143c" stroke-width="4" stroke-linejoin="round" />
<polyline points="940.7,374.9 951.1,369.7 964.2,359.3 977.2,352.8" fill="none" stroke="#1432f0" stroke-width="4" stroke-linejoin="round" />
<polyline points="977.2,352.8 987.6,354.1 994.1,369.7 1003.2,377.5 1016.2,380.1 1034.5,384.0 1042.3,387.9 1051.4,394.4" fill="none" stroke="#dc143c" stroke-width="4" stroke-linejoin="round" />
<polyline points="1051.4,394.4 1057.9,398.3 1065.7,394.4 1081.4,382.7 1094.4,356.7 1104.8,331.9 1110.0,321.5 1101.8,339.0 1113.6,315.5 1122.4,291.9 1129.8,278.6 1137.1,275.7 1171.0,271.3 1178.3,263.9 1186.3,253.0" fill="none" stroke="#1432f0" stroke-width="4" stroke-linejoin="round" />
<polyline points="1186.3,253.0 1196.0,258.0 1207.8,271.3 1219.6,293.4 1224.0,321.3 1228.4,350.8 1234.3,380.2 1238.7,415.6 1240.1,438.5 1247.8,477.1 1258.6,509.8 1266.3,496.3 1274.4,521.4 1282.5,509.8" fill="none" stroke="#dc143c" stroke-width="4" stroke-linejoin="round" />
<polyline points="1282.5,509.8 1290.6,513.7 1298.3,492.5" fill="none" stroke="#1432f0" stroke-width="4" stroke-linejoin="round" />
<polyline points="1298.3,492.5 1306.4,502.1 1314.5,542.6 1322.6,548.4 1330.3,542.6 1338.4,554.1 1346.5,566.5 1354.5,550.3" fill="none" stroke="#dc143c" stroke-width="4" stroke-linejoin="round" />
<path d="M632 291.800L1313 695.500" stroke="#b8860b" stroke-width="5" fill="none"/>
<polyline points="632,308.5 754.5,165 866,346" fill="none" stroke="#828282" stroke-width="3" stroke-linejoin="round" />
<polyline points="866,346 906,406 1114,225 1314,695" fill="none" stroke="#828282" stroke-width="3" stroke-linejoin="round" />
<polyline points="632.6,262.8 640.4,257.6 645.6,244.6 653.4,234.2 663.9,230.3 682.1,226.9 697.7,224.3 715.9,218.5 734.2,208.1 744.6,193.8 749.8,179.5 754.5,169.1 755.8,149.9 762.4,142.4 775.6,141.1 815.3,149.9 894.8,158.8 983.0,167.6 1071.3,173.3 1106.6,173.3 1119.8,167.6 1159.5,165.4 1216.9,164.5 1225.7,161.0 1234.5,138.9 1247.8,114.6 1265.4,103.6 1283.1,96.1 1298.5,96.1 1307.3,79.3 1316.2,70.5 1336.0,66.1 1353.7,66.1" fill="none" stroke="#a8a8a8" stroke-width="1" stroke-linejoin="round" />
<polyline points="632.6,296.7 643.0,283.6 656.0,275.8 669.1,269.3 695.1,265.4 715.9,261.5 731.6,252.4 742.0,239.4 751.1,221.1 757.6,206.8 758.0,209.5 766.8,202.0 784.4,202.9 828.6,208.6 894.8,213.0 983.0,220.5 1071.3,226.3 1111.0,227.2 1128.6,223.6 1159.5,220.5 1199.2,218.3 1221.3,219.2 1230.1,213.9 1241.2,198.5 1256.6,189.6 1278.7,185.2 1298.5,186.6 1307.3,178.6 1316.2,174.2 1336.0,176.4 1353.7,177.7" fill="none" stroke="#a8a8a8" stroke-width="1" stroke-linejoin="round" />
<polyline points="632.6,329.2 643.0,322.7 656.0,313.6 666.5,309.7 682.1,308.4 697.7,305.8 718.5,301.9 734.2,294.1 744.6,286.2 752.4,270.6 760.2,264.1 775.6,261.6 828.6,264.7 894.8,269.1 983.0,274.8 1071.3,279.2 1111.0,280.1 1159.5,274.8 1221.3,276.6 1232.3,273.5 1247.8,271.3 1283.1,274.8 1318.4,280.1 1353.7,288.9" fill="none" stroke="#a8a8a8" stroke-width="1" stroke-linejoin="round" />
<polyline points="633.4,392.1 673.1,388.6 780.7,380.0 860.0,377.0 899.1,375.4 925.1,380.1 964.2,382.7 1042.3,383.2 1068.3,386.6 1110.0,387.9 1090.0,387.6 1148.9,384.7 1210.7,382.6 1219.6,386.1 1228.4,397.9 1237.2,412.6 1249.0,427.3 1263.7,440.0 1282.5,453.9 1299.8,461.7 1309.5,479.0 1321.0,490.6 1340.3,504.0 1348.0,509.8 1355.7,510.6" fill="none" stroke="#a8a8a8" stroke-width="1" stroke-linejoin="round" />
<polyline points="633.4,423.1 647.2,425.2 655.8,429.5 694.6,426.5 729.0,426.5 744.1,431.7 754.8,443.7 767.8,442.4 815.1,433.8 862.5,431.7 896.9,429.5 914.1,433.8 931.4,436.0 991.6,436.0 1017.5,438.1 1043.3,441.6 1082.0,441.6 1125.1,439.4 1200.0,438.1 1213.1,436.6 1224.7,446.2 1232.4,467.4 1243.9,488.6 1255.5,507.9 1267.1,527.2 1282.5,542.6 1297.9,554.1 1309.5,577.3 1321.0,596.5 1336.4,611.9 1348.0,620.4 1354.9,621.6" fill="none" stroke="#a8a8a8" stroke-width="1" stroke-linejoin="round" />
<polyline points="633.4,454.0 647.2,468.3 660.1,470.4 694.6,467.4 729.0,468.3 744.1,475.6 754.8,502.7 767.8,502.7 815.1,491.9 862.5,486.8 896.9,483.3 922.8,491.1 952.9,491.9 995.9,491.1 1043.3,496.2 1082.0,495.4 1200.0,492.8 1213.1,490.6 1224.7,500.2 1232.4,527.2 1240.1,554.1 1247.8,573.4 1257.4,592.7 1272.9,615.8 1286.3,635.1 1299.8,662.0 1309.5,681.3 1321.0,700.6 1336.4,721.8 1348.0,730.6 1354.9,732.2" fill="none" stroke="#a8a8a8" stroke-width="1" stroke-linejoin="round" />
<circle cx="650" cy="248.5" r="9.200" fill="#808080"/>
<circle cx="706" cy="333" r="9.200" fill="#808080"/>
<circle cx="898.5" cy="298" r="9.200" fill="#808080"/>
<circle cx="866" cy="346" r="9.200" fill="#808080"/>
<circle cx="978.5" cy="322" r="9.200" fill="#808080"/>
<circle cx="1034.5" cy="406" r="9.200" fill="#808080"/>
<circle cx="1297.5" cy="430" r="9.200" fill="#808080"/>
<circle cx="1265.5" cy="598.5" r="9.200" fill="#808080"/>
<circle cx="754.5" cy="165" r="9.800" fill="#ffa500"/>
<circle cx="906" cy="406" r="9.800" fill="#ffa500"/>
<circle cx="1114" cy="225" r="9.800" fill="#ffa500"/>
<circle cx="1314" cy="695" r="9" fill="#ffa500"/>
<path d="M632 32.500H1702.500V757.500H632" stroke="#a0a0a0" stroke-width="1" fill="none"/>
<path d="M1702 34.5h4" stroke="#a0a0a0"/><text x="1708" y="37.8" font-size="9" fill="#b4b4b4" font-family="Liberation Sans,sans-serif">1.3040</text>
<path d="M1702 95h4" stroke="#a0a0a0"/><text x="1708" y="98.3" font-size="9" fill="#b4b4b4" font-family="Liberation Sans,sans-serif">1.3035</text>
<path d="M1702 155h4" stroke="#a0a0a0"/><text x="1708" y="158.3" font-size="9" fill="#b4b4b4" font-family="Liberation Sans,sans-serif">1.3030</text>
<path d="M1702 215h4" stroke="#a0a0a0"/><text x="1708" y="218.3" font-size="9" fill="#b4b4b4" font-family="Liberation Sans,sans-serif">1.3025</text>
<path d="M1702 275.5h4" stroke="#a0a0a0"/><text x="1708" y="278.8" font-size="9" fill="#b4b4b4" font-family="Liberation Sans,sans-serif">1.3020</text>
<path d="M1702 335.5h4" stroke="#a0a0a0"/><text x="1708" y="338.8" font-size="9" fill="#b4b4b4" font-family="Liberation Sans,sans-serif">1.3015</text>
<path d="M1702 395.5h4" stroke="#a0a0a0"/><text x="1708" y="398.8" font-size="9" fill="#b4b4b4" font-family="Liberation Sans,sans-serif">1.3010</text>
<path d="M1702 456h4" stroke="#a0a0a0"/><text x="1708" y="459.3" font-size="9" fill="#b4b4b4" font-family="Liberation Sans,sans-serif">1.3005</text>
<path d="M1702 516h4" stroke="#a0a0a0"/><text x="1708" y="519.3" font-size="9" fill="#b4b4b4" font-family="Liberation Sans,sans-serif">1.3000</text>
<path d="M1702 576.5h4" stroke="#a0a0a0"/><text x="1708" y="579.8" font-size="9" fill="#b4b4b4" font-family="Liberation Sans,sans-serif">1.2995</text>
<path d="M1702 636.5h4" stroke="#a0a0a0"/><text x="1708" y="639.8" font-size="9" fill="#b4b4b4" font-family="Liberation Sans,sans-serif">1.2990</text>
<path d="M1702 696.5h4" stroke="#a0a0a0"/><text x="1708" y="699.8" font-size="9" fill="#b4b4b4" font-family="Liberation Sans,sans-serif">1.2985</text>
<rect x="1703.500" y="534" width="39" height="13" fill="#a6a6a6"/><text x="1708" y="543.800" font-size="9" fill="#000" font-family="Liberation Sans,sans-serif">1.2998</text>
<path d="M626.5 757v4" stroke="#a0a0a0"/><text x="625.0" y="770" font-size="9.300" fill="#b4b4b4" font-family="Liberation Sans,sans-serif">15 Oct 02:55</text>
<path d="M690.5 757v4" stroke="#a0a0a0"/><text x="689.0" y="770" font-size="9.300" fill="#b4b4b4" font-family="Liberation Sans,sans-serif">15 Oct 03:35</text>
<path d="M754.5 757v4" stroke="#a0a0a0"/><text x="753.0" y="770" font-size="9.300" fill="#b4b4b4" font-family="Liberation Sans,sans-serif">15 Oct 04:15</text>
<path d="M818.5 757v4" stroke="#a0a0a0"/><text x="817.0" y="770" font-size="9.300" fill="#b4b4b4" font-family="Liberation Sans,sans-serif">15 Oct 04:55</text>
<path d="M882.5 757v4" stroke="#a0a0a0"/><text x="881.0" y="770" font-size="9.300" fill="#b4b4b4" font-family="Liberation Sans,sans-serif">15 Oct 05:35</text>
<path d="M946.5 757v4" stroke="#a0a0a0"/><text x="945.0" y="770" font-size="9.300" fill="#b4b4b4" font-family="Liberation Sans,sans-serif">15 Oct 06:15</text>
<path d="M1010.5 757v4" stroke="#a0a0a0"/><text x="1009.0" y="770" font-size="9.300" fill="#b4b4b4" font-family="Liberation Sans,sans-serif">15 Oct 06:55</text>
<path d="M1074.5 757v4" stroke="#a0a0a0"/><text x="1073.0" y="770" font-size="9.300" fill="#b4b4b4" font-family="Liberation Sans,sans-serif">15 Oct 07:35</text>
<path d="M1138.5 757v4" stroke="#a0a0a0"/><text x="1137.0" y="770" font-size="9.300" fill="#b4b4b4" font-family="Liberation Sans,sans-serif">15 Oct 08:15</text>
<path d="M1202.5 757v4" stroke="#a0a0a0"/><text x="1201.0" y="770" font-size="9.300" fill="#b4b4b4" font-family="Liberation Sans,sans-serif">15 Oct 08:55</text>
<path d="M1266.5 757v4" stroke="#a0a0a0"/><text x="1265.0" y="770" font-size="9.300" fill="#b4b4b4" font-family="Liberation Sans,sans-serif">15 Oct 09:35</text>
<path d="M1330.5 757v4" stroke="#a0a0a0"/><text x="1329.0" y="770" font-size="9.300" fill="#b4b4b4" font-family="Liberation Sans,sans-serif">15 Oct 10:15</text>
<path d="M1365 33h11l-5.500 5z" fill="#f0f0f0"/>
<text x="1377" y="67.5" font-size="18.500" font-style="italic" fill="#ff4500" stroke="#222222" stroke-width=".300" textLength="51" lengthAdjust="spacingAndGlyphs" font-family="Liberation Sans,sans-serif">[+1/8]</text><text x="1443" y="67.5" font-size="18.500" font-style="italic" fill="#ff4500" stroke="#222222" stroke-width=".300" textLength="58" lengthAdjust="spacingAndGlyphs" font-family="Liberation Sans,sans-serif">1·3039</text>
<text x="1381" y="159.5" font-size="18.500" font-style="italic" fill="#00dede" stroke="#222222" stroke-width=".300" textLength="45" lengthAdjust="spacingAndGlyphs" font-family="Liberation Sans,sans-serif">[8/8]</text><text x="1442" y="159.5" font-size="18.500" font-style="italic" fill="#00dede" stroke="#222222" stroke-width=".300" textLength="53.5" lengthAdjust="spacingAndGlyphs" font-family="Liberation Sans,sans-serif">1·3031</text>
<text x="1379" y="251.5" font-size="18.500" font-style="italic" fill="#ffd700" stroke="#222222" stroke-width=".300" textLength="44" lengthAdjust="spacingAndGlyphs" font-family="Liberation Sans,sans-serif">[7/8]</text><text x="1439" y="251.5" font-size="18.500" font-style="italic" fill="#ffd700" stroke="#222222" stroke-width=".300" textLength="58" lengthAdjust="spacingAndGlyphs" font-family="Liberation Sans,sans-serif">1·3023</text>
<text x="1381" y="343.5" font-size="18.500" font-style="italic" fill="#ff69b4" stroke="#222222" stroke-width=".300" textLength="45" lengthAdjust="spacingAndGlyphs" font-family="Liberation Sans,sans-serif">[6/8]</text><text x="1442" y="343.5" font-size="18.500" font-style="italic" fill="#ff69b4" stroke="#222222" stroke-width=".300" textLength="55" lengthAdjust="spacingAndGlyphs" font-family="Liberation Sans,sans-serif">1·3016</text>
<text x="1379" y="435.5" font-size="18.500" font-style="italic" fill="#32cd32" stroke="#222222" stroke-width=".300" textLength="44" lengthAdjust="spacingAndGlyphs" font-family="Liberation Sans,sans-serif">[5/8]</text><text x="1439" y="435.5" font-size="18.500" font-style="italic" fill="#32cd32" stroke="#222222" stroke-width=".300" textLength="59" lengthAdjust="spacingAndGlyphs" font-family="Liberation Sans,sans-serif">1·3008</text>
<text x="1377" y="527.5" font-size="18.500" font-style="italic" fill="#00ffff" stroke="#222222" stroke-width=".300" textLength="46" lengthAdjust="spacingAndGlyphs" font-family="Liberation Sans,sans-serif">[4/8]</text><text x="1439" y="527.5" font-size="18.500" font-style="italic" fill="#00ffff" stroke="#222222" stroke-width=".300" textLength="60" lengthAdjust="spacingAndGlyphs" font-family="Liberation Sans,sans-serif">1·3000</text>
<text x="1379" y="619.5" font-size="18.500" font-style="italic" fill="#32cd32" stroke="#222222" stroke-width=".300" textLength="44" lengthAdjust="spacingAndGlyphs" font-family="Liberation Sans,sans-serif">[3/8]</text><text x="1439" y="619.5" font-size="18.500" font-style="italic" fill="#32cd32" stroke="#222222" stroke-width=".300" textLength="59" lengthAdjust="spacingAndGlyphs" font-family="Liberation Sans,sans-serif">1·2993</text>
<text x="1380" y="710.5" font-size="18.500" font-style="italic" fill="#ff69b4" stroke="#222222" stroke-width=".300" textLength="43" lengthAdjust="spacingAndGlyphs" font-family="Liberation Sans,sans-serif">[2/8]</text><text x="1439" y="710.5" font-size="18.500" font-style="italic" fill="#ff69b4" stroke="#222222" stroke-width=".300" textLength="59" lengthAdjust="spacingAndGlyphs" font-family="Liberation Sans,sans-serif">1·2985</text>
<rect x="626" y="432.500" width="57.500" height="23" fill="#222222" stroke="#19e0e6" stroke-width="1.200"/><text x="682" y="451.500" text-anchor="end" font-size="19.500" fill="#00ffff" font-family="Liberation Sans,sans-serif">.3006</text>
<rect x="1054" y="420.500" width="61" height="23" fill="#222222" stroke="#19e0e6" stroke-width="1.200"/><text x="1113.500" y="439.500" text-anchor="end" font-size="19.500" fill="#00ffff" font-family="Liberation Sans,sans-serif">1.3007</text>
<path d="M1308 456.500h10" stroke="#ffd700"/><rect x="1318" y="445" width="61.500" height="23" fill="#222222" stroke="#ffd700" stroke-width="1.200"/><text x="1378" y="464" text-anchor="end" font-size="19.500" fill="#ffd700" font-family="Liberation Sans,sans-serif">1.3005</text>
<path d="M726 181.5l6.800 -5l1.700 5l6.800 -5l1.700 5l6.800 -5l1.700 5" stroke="#ffd700" stroke-width="1.600" fill="none" stroke-linejoin="miter"/>
<path d="M726 191.5l6.800 -5l1.700 5l6.800 -5l1.700 5l6.800 -5l1.700 5" stroke="#ffd700" stroke-width="1.600" fill="none" stroke-linejoin="miter"/>
<path d="M765 211.5l6.800 -5l1.700 5l6.800 -5l1.700 5l6.800 -5l1.700 5" stroke="#1e90ff" stroke-width="1.600" fill="none" stroke-linejoin="miter"/>
<path d="M765 221.5l6.800 -5l1.700 5l6.800 -5l1.700 5l6.800 -5l1.700 5" stroke="#1e90ff" stroke-width="1.600" fill="none" stroke-linejoin="miter"/>
<path d="M942 389.5l6.800 -5l1.700 5l6.800 -5l1.700 5l6.800 -5l1.700 5" stroke="#ffd700" stroke-width="1.600" fill="none" stroke-linejoin="miter"/>
<path d="M942 399.5l6.800 -5l1.700 5l6.800 -5l1.700 5l6.800 -5l1.700 5" stroke="#ffd700" stroke-width="1.600" fill="none" stroke-linejoin="miter"/>
<path d="M1118 202.5l6.800 -5l1.700 5l6.800 -5l1.700 5l6.800 -5l1.700 5" stroke="#ffd700" stroke-width="1.600" fill="none" stroke-linejoin="miter"/>
<path d="M1118 212.5l6.800 -5l1.700 5l6.800 -5l1.700 5l6.800 -5l1.700 5" stroke="#ffd700" stroke-width="1.600" fill="none" stroke-linejoin="miter"/>
<path d="M1142 231.5l6.800 -5l1.700 5l6.800 -5l1.700 5l6.800 -5l1.700 5" stroke="#1e90ff" stroke-width="1.600" fill="none" stroke-linejoin="miter"/>
<path d="M1142 241.5l6.800 -5l1.700 5l6.800 -5l1.700 5l6.800 -5l1.700 5" stroke="#1e90ff" stroke-width="1.600" fill="none" stroke-linejoin="miter"/>
<path d="M1013 416.5l6.800 -5l1.700 5l6.800 -5l1.700 5l6.800 -5l1.700 5" stroke="#1e90ff" stroke-width="1.600" fill="none" stroke-linejoin="miter"/>
<path d="M1013 425.5l6.800 -5l1.700 5l6.800 -5l1.700 5l6.800 -5l1.700 5" stroke="#1e90ff" stroke-width="1.600" fill="none" stroke-linejoin="miter"/>
<path d="M1342 637.5l6.800 -5l1.700 5l6.800 -5l1.700 5l6.800 -5l1.700 5" stroke="#ffd700" stroke-width="1.600" fill="none" stroke-linejoin="miter"/>
<path d="M1342 646.5l6.800 -5l1.700 5l6.800 -5l1.700 5l6.800 -5l1.700 5" stroke="#ffd700" stroke-width="1.600" fill="none" stroke-linejoin="miter"/>
<path d="M731 225v8M727.5 229.5l3.5 4l3.5 -4" stroke="#ff0000" stroke-width="1.6" fill="none"/>
<path d="M761 149v8M757.5 153.5l3.5 4l3.5 -4" stroke="#ff0000" stroke-width="1.6" fill="none"/>
<path d="M964 313v8M960.5 317.5l3.5 4l3.5 -4" stroke="#ff0000" stroke-width="1.6" fill="none"/>
<path d="M1129 217v8M1125.5 221.5l3.5 4l3.5 -4" stroke="#ff0000" stroke-width="1.6" fill="none"/>
<path d="M791 344l1.200 -1.200l3.200 2.400l0.400-2.800l1.600 0.400v6.400h-6.400l-0.400-1.600l2.800-0.400z" fill="#ff0000"/>
<path d="M1246 619l1.200 -1.200l3.200 2.400l0.400-2.800l1.600 0.400v6.400h-6.400l-0.400-1.600l2.800-0.400z" fill="#ff0000"/>
<path d="M1319 642l1.200 -1.200l3.200 2.400l0.400-2.800l1.600 0.400v6.400h-6.400l-0.400-1.600l2.800-0.400z" fill="#ff0000"/>
<path d="M871 359l1.200 -1.200l3.200 2.400l0.400-2.800l1.600 0.400v6.400h-6.400l-0.400-1.600l2.800-0.400z" fill="#ff0000"/>
<path d="M655 240l7-1.500l-1 7.500l-2-2l-3 2l-1.500-2l3-2z" fill="#00e000"/>
<path d="M1010 414v-9M1006 408.500l4-4.500l4 4.500" stroke="#00e000" stroke-width="1.800" fill="none"/>
<path d="M1044 431v-17M1036 423l8-10l9 10" stroke="#087808" stroke-width="5" fill="none"/>
<path d="M1186.500 223v16M1178 234l8.500 10l8.500-10" stroke="#dc143c" stroke-width="4.500" fill="none"/>
<rect x="1598.500" y="43.500" width="94" height="234" fill="#1f2935" stroke="#f0f0f0" stroke-width="1"/>
<text transform="translate(1607,72.500) scale(0.720,1)" font-size="25.500" font-weight="bold" fill="#fff" stroke="#fff" stroke-width=".600" font-family="Liberation Sans,sans-serif">GBPUSD</text>
<text transform="translate(1607,92.800) scale(1.230,1)" font-size="19.500" font-weight="bold" fill="#00ffff" stroke="#00ffff" stroke-width=".900" font-family="Liberation Sans,sans-serif">1.2998</text>
<text x="1616.500" y="109" font-size="14.700" font-weight="bold" fill="#fff" font-family="Liberation Mono,monospace">SPD:0.2</text>
<text transform="translate(1644,126.400) scale(1.150,1)" font-size="17" font-weight="bold" fill="#00ffff" stroke="#00ffff" stroke-width=".800" font-family="Liberation Sans,sans-serif">4:18</text>
<text x="1607" y="140.500" font-size="14.400" font-weight="bold" fill="#fff" font-family="Liberation Sans,sans-serif">Daily Open</text>
<text transform="translate(1614.500,161) scale(1.045,1)" font-size="18.500" font-weight="bold" fill="#ee82ee" stroke="#ee82ee" stroke-width=".800" font-family="Liberation Sans,sans-serif">1.3011</text>
<text x="1617" y="178" font-size="13.500" fill="#fff" font-family="Liberation Sans,sans-serif">PFO</text><text x="1681.500" y="178.5" text-anchor="end" font-size="14.500" fill="#ee82ee" font-family="Liberation Sans,sans-serif">-1</text>
<text x="1617" y="194.5" font-size="13.500" fill="#a8a8a8" font-family="Liberation Sans,sans-serif">HiLo</text><text x="1681.500" y="195.0" text-anchor="end" font-size="14.500" fill="#c0c0c0" font-family="Liberation Sans,sans-serif">4</text>
<text x="1617" y="210" font-size="13.500" fill="#fff" font-family="Liberation Sans,sans-serif">ADR</text><text x="1681.500" y="210.5" text-anchor="end" font-size="14.500" fill="#32cd32" font-family="Liberation Sans,sans-serif">14</text>
<text x="1617" y="226" font-size="13.500" fill="#fff" font-family="Liberation Sans,sans-serif">61%</text><text x="1681.500" y="226.5" text-anchor="end" font-size="14.500" fill="#fff" font-family="Liberation Sans,sans-serif">9</text>
<text x="1617" y="242.5" font-size="13.500" fill="#fff" font-family="Liberation Sans,sans-serif">38%</text><text x="1681.500" y="243.0" text-anchor="end" font-size="14.500" fill="#fff" font-family="Liberation Sans,sans-serif">6</text>
<text x="1638.500" y="266" font-size="20" fill="#ee82ee" font-family="Liberation Sans,sans-serif">7%</text><text x="1664.500" y="258.700" font-size="10.800" fill="#fff" font-family="Liberation Sans,sans-serif">ADR</text>
</svg>
</div>

<!-- ======= CHART TABS ======= -->
<div id="tabsbar" class="abs">
<div class="abs" style="left:0;top:-1px;width:915px;height:2px;background:#000;"></div>
<div class="abs" style="left:1003px;top:-1px;width:110px;height:2px;background:#000;"></div>
<span class="ctab" style="left:-2px">,M5</span><div class="csep" style="left:31px"></div><span class="ctab" style="left:42px">USDCHF,M5</span><div class="csep" style="left:119px"></div><span class="ctab" style="left:131px">AUDNZD,M5</span><div class="csep" style="left:211px"></div><span class="ctab" style="left:223px">GBPUSD,M5</span><div class="csep" style="left:299px"></div><span class="ctab" style="left:309px">EURUSD,M5</span><div class="csep" style="left:383px"></div><span class="ctab" style="left:394px">USDCHF,M5</span><div class="csep" style="left:471px"></div><span class="ctab" style="left:482px">USDCAD,M5</span><div class="csep" style="left:559px"></div><span class="ctab" style="left:570px">AUDUSD,M5</span><div class="csep" style="left:647px"></div><span class="ctab" style="left:658px">NZDUSD,M5</span><div class="csep" style="left:735px"></div><span class="ctab" style="left:747px">GBPUSD,M5</span><div class="csep" style="left:823px"></div><span class="ctab" style="left:834px">GBPUSD,M15</span><div class="abs" style="left:915px;top:-1px;width:89px;height:22px;box-sizing:border-box;background:#fff;border:2px solid #000;border-top:none;"></div>
<span class="ctab" style="left:927px;color:#000;">GBPUSD,M5</span>
<svg class="abs" style="left:1080px;top:7px" width="26" height="8" viewBox="0 0 26 8"><path d="M4 0v8l-4-4zM20 0v8l4-4z" fill="#8a8a8a"/></svg>
</div>

<!-- ======= TERMINAL ======= -->
<div id="term" class="abs">
<div class="abs" style="left:0;top:0;width:1745px;height:5px;background:#f7f7f7;border-bottom:1px solid #b4b4b4;box-sizing:border-box;"></div>
<div class="abs" style="left:0;top:5px;width:1724px;height:23px;background:linear-gradient(#f2f4f6 0%,#e4e9ec 45%,#d3dade 70%,#dde3e6 88%,#eef1f3 100%);border-bottom:1px solid #c4c8cc;box-sizing:border-box;"></div>
<div class="abs" style="left:0;top:28px;width:1724px;height:20px;background:#ebebeb;border-bottom:1px solid #cfcfcf;box-sizing:border-box;"></div>
<div class="abs" style="left:0;top:48px;width:1724px;height:20px;background:#fff;border-bottom:1px solid #cfcfcf;box-sizing:border-box;"></div>
<div class="abs" style="left:0;top:68px;width:1724px;height:15px;background:#ebebeb;"></div>
<div class="abs" style="left:1724px;top:5px;width:21px;height:78px;background:#f0f0f0;"></div>
<div class="abs" style="left:1729px;top:23px;width:8px;height:15px;box-sizing:border-box;border:1px solid #8a8a8a;border-radius:3px;background:#fafafa;"></div>
<div class="abs" style="left:2px;top:6px;width:30px;height:21px;background:linear-gradient(#f4f4f4,#e2e2e2);border:1px solid #c8c8c8;box-sizing:border-box;"></div>
<span class="abs" style="left:7px;top:8px;font-size:14px;color:#222;">С</span>
<span class="abs" style="left:5px;top:31px;font-size:12px;font-weight:bold;color:#222;">сг</span>
<span class="abs" style="left:5px;top:51px;font-size:12px;color:#222;">x9</span>
<span class="abs" id="status" style="left:5.500px;top:73px;font-size:11.360px;color:#000;white-space:nowrap;">123PatternsV7 Alerts_Mod GBPUSD,M15: initialized</span>
</div>

<!-- ======= DIALOG 1 ======= -->
<div id="dlg1" class="dlg" style="left:23px;top:39px;width:587px;height:120px;background:linear-gradient(90deg,#9dd0f8 0,#8ac0ec 5%,#7eb3e2 11%,#7eb3e2 100%);border:1px solid #7eb3e2;border-left-color:#4e6a88;border-top-color:#8fbde6;">
<div class="glow" style="left:168px;top:5px;width:252px;height:18px;"></div>
<div class="title" id="t1" style="top:6.600px;left:179.400px;right:auto;font-size:12.600px;line-height:16px;color:#1c1c1c;transform:scaleX(1.047);transform-origin:0 0;">Список индикаторов на GBPUSD,M5</div>
<svg class="abs" style="left:9px;top:7px" width="18" height="17" viewBox="0 0 18 17">
<rect x="0.500" y="0.500" width="12.500" height="9.500" fill="#e4eef9" stroke="#7f9dc4"/><rect x="1" y="1" width="11.500" height="1.600" fill="#b8cdea"/><path d="M3.500 3v6M2 4.500l1.500-1.500l1.500 1.500M2 7.500l1.500 1.500l1.500-1.500" stroke="#46689a" stroke-width=".900" fill="none"/>
<rect x="6.500" y="5.500" width="9.500" height="9.500" rx="1.500" fill="#f4cc3c" stroke="#c79a16"/><text x="9.200" y="13.300" font-size="8.500" font-style="italic" font-weight="bold" fill="#8a6a10" font-family="Liberation Serif,serif">f</text>
</svg>
<div class="capbtn" style="left:510.500px;top:-1px;width:68px;height:21px;background:linear-gradient(#bcd8f1 0%,#9cc4e9 47%,#6b9dcd 50%,#7fb1df 100%);">
<span class="capg" style="left:10px;">?</span><span class="capg capx" style="left:42px;">x</span>
</div>
<div class="client" style="left:7px;top:29px;width:571px;height:90px;box-shadow:-1px 0 0 #5f86ae,1px 0 0 #b5d6f3,0 -1px 0 #6f9bc8;">
  <div class="abs" style="left:8px;top:8px;width:453px;height:80px;background:#fff;border:1px solid #828790;box-sizing:border-box;"></div>
  <div class="abs" style="left:19px;top:16px;width:9px;height:9px;box-sizing:border-box;border:1px solid #919191;background:linear-gradient(135deg,#fff,#d6d6d6);border-radius:1px;"></div>
  <div class="abs" style="left:21px;top:20px;width:5px;height:1px;background:#3a4fa0;"></div>
  <div class="abs" style="left:29px;top:20px;width:6px;height:1px;background:repeating-linear-gradient(90deg,#808080 0 1px,transparent 1px 2px);"></div>
  <div class="abs" style="left:44px;top:28px;width:1px;height:12px;background:repeating-linear-gradient(#808080 0 1px,transparent 1px 2px);"></div>
  <svg class="abs" style="left:36px;top:12px" width="16" height="15" viewBox="0 0 16 15"><rect x="0.5" y="0.5" width="15" height="13" rx="1" fill="#fff" stroke="#2a55c8"/><rect x="1" y="1" width="14" height="3" fill="#2a55c8"/><rect x="9" y="2" width="1" height="1" fill="#fff"/><rect x="11" y="2" width="1" height="1" fill="#fff"/><rect x="13" y="2" width="1" height="1" fill="#fff"/><path d="M3 11c2-6 3-6 4.500-3s2.500 3 5-3" stroke="#6a7fd8" stroke-width="1.400" fill="none"/></svg>
  <span class="lbl" id="mg" style="left:58px;top:12px;font-size:11px;">Главный график</span>
  <div class="abs" style="left:58px;top:31px;width:13px;height:13px;box-sizing:border-box;border:1px solid #c79a16;border-radius:2px;background:#f2cf55;"></div>
  <span class="lbl" style="left:63px;top:32px;font-family:'Liberation Serif',serif;font-style:italic;font-weight:bold;font-size:10px;color:#8a6a10;">f</span>
  <span class="lbl" id="xu" style="left:78px;top:31px;font-size:11px;letter-spacing:-0.200px;">XU ADR D1 button</span>
  <div class="btn" style="left:470px;top:8px;width:93px;height:23px;line-height:21px;">Свойства</div>
</div>
</div>

<!-- ======= DIALOG 2 ======= -->
<div id="dlg2" class="dlg" style="left:14px;top:107px;width:619px;height:767px;background:linear-gradient(90deg,#9bd2fb 0%,#99d1fb 91%,#7db5e3 97%);border:1px solid #94cbf6;border-right-color:#7db5e3;box-shadow:-1px 0 0 rgba(90,125,165,.6),0 -1px 0 rgba(130,175,215,.6),0 1px 0 rgba(150,200,240,.6);">
<div class="glow" style="left:182px;top:4px;width:256px;height:18px;opacity:.85"></div>
<div class="title" id="t2" style="top:5.500px;left:193.600px;right:auto;font-size:12.600px;line-height:16px;color:#1c1c1c;transform:scaleX(1.054);transform-origin:0 0;">Custom Indicator - XU-XARD 2nd DOT</div>
<div class="capbtn" style="left:542px;top:-1px;width:69px;height:20px;background:linear-gradient(#c6def4 0%,#a4c9ec 47%,#6b9dcd 50%,#82b4e2 100%);">
<span class="capg" style="left:10px;">?</span><span class="capg capx" style="left:42px;">x</span>
</div>
<div class="client" style="left:6px;top:28px;width:604px;height:731px;box-shadow:-1px 0 0 #6ea6d8,1px 0 0 #b5d6f3,0 -1px 0 #7fb2e0,0 1px 0 #b5d6f3;">
  <!-- white page -->
  <div class="abs" style="left:7px;top:27px;width:591px;height:668px;background:#fff;border:1px solid #898c95;box-sizing:border-box;"></div>
  <!-- tabs -->
  <div class="tab" style="left:8px;top:9px;width:80px;height:19px;line-height:19px;">О программе</div>
  <div class="tab" style="left:137px;top:9px;width:114px;height:19px;line-height:19px;">Входные параметры</div>
  <div class="tab" style="left:250px;top:9px;width:44px;height:19px;line-height:19px;">Цвета</div>
  <div class="tab" style="left:293px;top:9px;width:81px;height:19px;line-height:19px;">Отображение</div>
  <div class="tab" style="left:86px;top:7px;width:51px;height:21px;line-height:19px;background:#fff;">Общие</div>
  <!-- rounded highlight -->
  <div class="abs" style="left:42px;top:64px;width:173px;height:27px;box-sizing:border-box;border:2px solid #000;border-radius:9px;"></div>
  <!-- checkboxes -->
  <div class="chk" style="left:55px;top:71px;"></div>
  <svg class="abs" style="left:55px;top:69px" width="15" height="15" viewBox="0 0 15 15"><path d="M2.500 8.500l3 3.800l6-8.800" stroke="#259a4c" stroke-width="2.800" fill="none"/><path d="M3.300 8.300l2.200 2.700l5.300-7.600" stroke="#5fd08a" stroke-width="1" fill="none"/></svg>
  <span class="lbl" style="left:71px;top:71px;">Разрешить импорт DLL</span>
  <div class="chk" style="left:55px;top:95px;"></div>
  <svg class="abs" style="left:55px;top:93px" width="15" height="15" viewBox="0 0 15 15"><path d="M2.500 8.500l3 3.800l6-8.800" stroke="#259a4c" stroke-width="2.800" fill="none"/><path d="M3.300 8.300l2.200 2.700l5.300-7.600" stroke="#5fd08a" stroke-width="1" fill="none"/></svg>
  <span class="lbl" style="left:71px;top:95px;">Разрешить импорт внешних экспертов</span>
  <div class="chk" style="left:55px;top:119px;"></div>
  <span class="lbl" style="left:71px;top:119px;">Разрешить изменение настроек сигналов</span>
  <span class="lbl" id="prob" style="left:224.500px;top:68px;font-size:14.930px;">Problem "point 2" is removed by one "tick"</span>
  <!-- buttons -->
  <div class="btn" style="left:360px;top:701px;width:73px;height:23px;line-height:21px;">OK</div>
  <div class="btn" style="left:441px;top:701px;width:73px;height:23px;line-height:21px;">Отмена</div>
  <div class="btn" style="left:522px;top:701px;width:73px;height:23px;line-height:21px;">Сброс</div>
  <svg class="abs" style="left:593px;top:718px" width="11" height="11" viewBox="0 0 11 11"><path d="M10 2L2 10M10 5L5 10M10 8L8 10" stroke="#555" stroke-width="1.200"/></svg>
</div>
</div>

</body>
</html>
